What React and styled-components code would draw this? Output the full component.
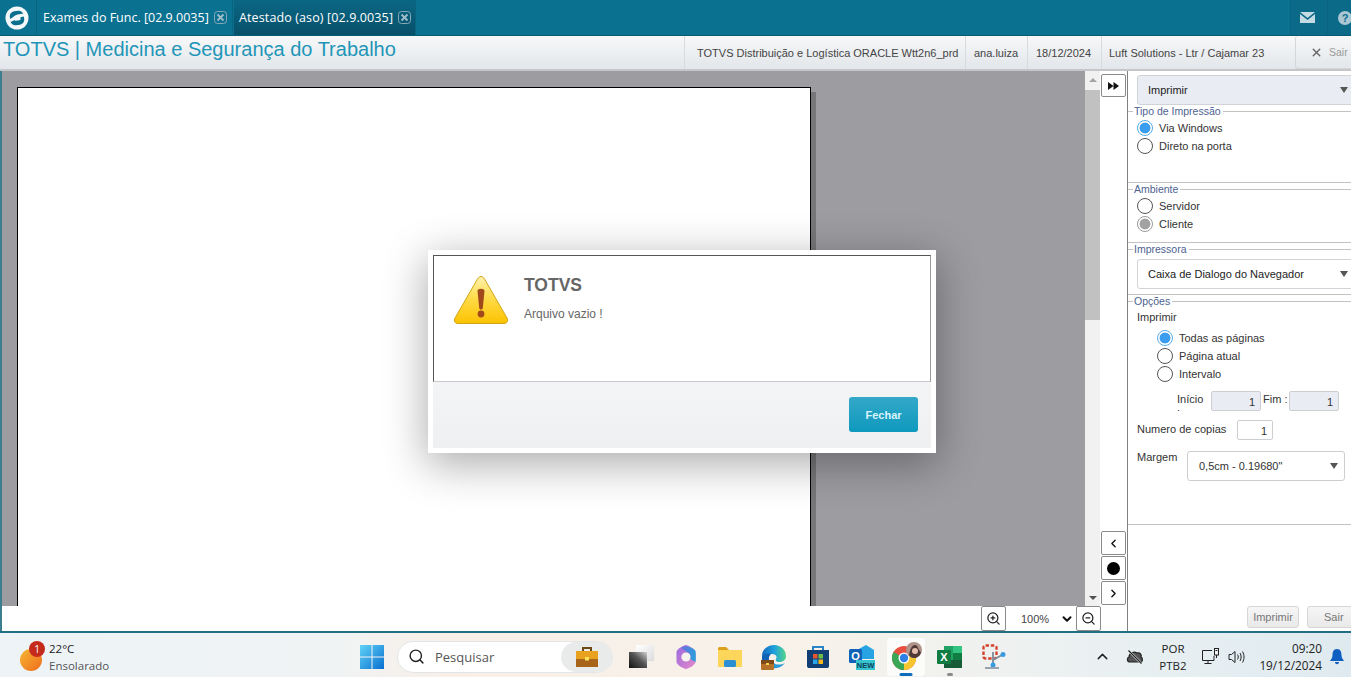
import styled, { createGlobalStyle } from "styled-components";
import { ChevronLeft, ChevronRight, ChevronUp, ChevronDown, Search, ZoomIn, ZoomOut, X } from "lucide-react";

const Global = createGlobalStyle`
  html, body { margin: 0; padding: 0; background: #fff; overflow: hidden; }
  * { box-sizing: border-box; }
  body { font-family: "Liberation Sans", Arial, sans-serif; font-size: 11px; color: #333; }
`;

function TotvsLogo() {
  return (
    <svg width="24" height="24" viewBox="0 0 24 24">
      <circle cx="12" cy="12" r="11.5" fill="#f4f8f9" />
      <rect x="5" y="5" width="14" height="14" rx="5" fill="#0b6f8e" transform="rotate(-8 12 12)" />
      <path d="M5 14.500 C9 13.500 10 10.500 13 10 L19 9" stroke="#f4f8f9" strokeWidth="3.200" fill="none" />
      <rect x="9" y="9.500" width="6.500" height="5" rx="1.500" fill="#f4f8f9" transform="rotate(-8 12 12)" />
    </svg>
  );
}

function TabClose() {
  return (
    <svg width="13" height="13" viewBox="0 0 13 13">
      <rect x=".5" y=".5" width="12" height="12" rx="3" fill="none" stroke="#86a9b8" />
      <path d="M3.500 3.500 L9.500 9.500 M9.500 3.500 L3.500 9.500" stroke="#a3bdc9" strokeWidth="1.800" />
    </svg>
  );
}

function WarningIcon() {
  return (
    <svg width="56" height="50" viewBox="0 0 56 50">
      <defs>
        <linearGradient id="warn" x1="0" y1="0" x2="0" y2="1">
          <stop offset="0" stopColor="#fff3b0" />
          <stop offset=".45" stopColor="#ffdc4a" />
          <stop offset="1" stopColor="#fcc200" />
        </linearGradient>
      </defs>
      <path d="M28 1.500 C29.500 1.500 30.500 2.500 31.500 4 L54 43 C55.500 46 54 48.500 51 48.500 L5 48.500 C2 48.500 .5 46 2 43 L24.500 4 C25.500 2.500 26.500 1.500 28 1.500 Z" fill="url(#warn)" stroke="#d2a514" />
      <path d="M24.500 16 C24.500 13 31.500 13 31.500 16 L29.800 33 C29.600 35 26.400 35 26.200 33 Z" fill="#a1491c" />
      <circle cx="28" cy="39" r="3.400" fill="#a1491c" />
    </svg>
  );
}

function MailIcon() {
  return (
    <svg width="15" height="11" viewBox="0 0 15 11">
      <path d="M0 0 H15 L7.500 6 Z" fill="#c5dbe4" />
      <path d="M0 2 L7.500 8 L15 2 V11 H0 Z" fill="#c5dbe4" />
    </svg>
  );
}

function HelpIcon() {
  return (
    <svg width="14" height="14" viewBox="0 0 14 14">
      <circle cx="7" cy="7" r="7" fill="#a9c6d2" />
      <text x="7" y="11" textAnchor="middle" fontSize="11" fontWeight="700" fill="#0b6f8e" fontFamily="Liberation Sans">?</text>
    </svg>
  );
}

function FastForward() {
  return (
    <svg width="11" height="8" viewBox="0 0 11 8">
      <path d="M0 0 L5.500 4 L0 8 Z M5.500 0 L11 4 L5.500 8 Z" fill="#111" />
    </svg>
  );
}

function Weather() {
  return (
    <svg width="24" height="24" viewBox="0 0 24 24">
      <defs>
        <linearGradient id="sun" x1="0" y1="0" x2="1" y2="1">
          <stop offset="0" stopColor="#f7b733" />
          <stop offset="1" stopColor="#ee6c1c" />
        </linearGradient>
      </defs>
      <circle cx="12" cy="12" r="11" fill="url(#sun)" />
    </svg>
  );
}

function WinLogo() {
  return (
    <svg width="24" height="24" viewBox="0 0 24 24">
      <defs>
        <linearGradient id="win" x1="0" y1="0" x2="1" y2="1">
          <stop offset="0" stopColor="#5fd3f7" />
          <stop offset="1" stopColor="#0a6fd0" />
        </linearGradient>
      </defs>
      <path d="M0 0 H11.500 V11.500 H0 Z M12.500 0 H24 V11.500 H12.500 Z M0 12.500 H11.500 V24 H0 Z M12.500 12.500 H24 V24 H12.500 Z" fill="url(#win)" />
    </svg>
  );
}

function Briefcase() {
  return (
    <svg width="24" height="22" viewBox="0 0 24 22">
      <path d="M8 5 V2 H16 V5" fill="none" stroke="#6e4a12" strokeWidth="2" />
      <rect x="1" y="5" width="22" height="8" fill="#e9a21f" />
      <rect x="1" y="13" width="22" height="8" fill="#a8651a" />
      <rect x="10" y="11" width="4" height="3.500" fill="#f8e25c" />
    </svg>
  );
}

function TaskView() {
  return (
    <svg width="26" height="24" viewBox="0 0 26 24">
      <defs>
        <linearGradient id="tvBack" x1="0" y1="0" x2="1" y2="1">
          <stop offset="0" stopColor="#ffffff" />
          <stop offset="1" stopColor="#dcdcdc" />
        </linearGradient>
        <linearGradient id="tvFront" x1="1" y1="0" x2="0" y2="1">
          <stop offset="0" stopColor="#d0d0d0" />
          <stop offset=".45" stopColor="#555" />
          <stop offset="1" stopColor="#111" />
        </linearGradient>
      </defs>
      <rect x="7" y="0" width="18" height="16" fill="url(#tvBack)" />
      <rect x="0" y="7" width="18" height="16" fill="url(#tvFront)" />
    </svg>
  );
}

function Copilot() {
  return (
    <svg width="22" height="26" viewBox="0 0 22 26">
      <defs>
        <linearGradient id="copA" x1="0" y1="0" x2="1" y2="0">
          <stop offset="0" stopColor="#6a6fdc" />
          <stop offset="1" stopColor="#2aa0dc" />
        </linearGradient>
        <linearGradient id="copB" x1="0" y1="0" x2="1" y2="1">
          <stop offset="0" stopColor="#9a6ae0" />
          <stop offset="1" stopColor="#e58ac8" />
        </linearGradient>
      </defs>
      <path d="M11 1 C13 1 20 5 20.500 8 V18 C20.500 21 13 25 11 25 C9 25 1.500 21 1.500 18 V8 C1.500 5 9 1 11 1 Z" fill="url(#copB)" />
      <path d="M6 4 C9 1.500 13 1 20 6 C21 7 21 16 20.500 18 L15 15 V10 Z" fill="url(#copA)" />
      <circle cx="11" cy="13" r="4.600" fill="#f6f3ee" />
    </svg>
  );
}

function Folder() {
  return (
    <svg width="26" height="22" viewBox="0 0 26 22">
      <path d="M1 3 C1 1.500 2 1 3 1 H9 L12 4 H1 Z" fill="#dba017" />
      <rect x="1" y="4" width="24" height="17" fill="#fbd65b" />
      <rect x="7" y="14" width="12" height="7" rx="1.500" fill="#2b8fd3" />
    </svg>
  );
}

function Edge() {
  return (
    <svg width="26" height="26" viewBox="0 0 26 26">
      <defs>
        <linearGradient id="edgeA" x1="0" y1="0" x2="1" y2="0">
          <stop offset="0" stopColor="#1268c0" />
          <stop offset=".5" stopColor="#1ea0dc" />
          <stop offset="1" stopColor="#53d48a" />
        </linearGradient>
      </defs>
      <path d="M1 12 C1 5 7 1 13 1 C20 1 25 6 25 12 C25 16 22 18 18 18 C15 18 14 16.500 15 15 C16.500 13 15 10 11 10 C7 10 3 11 1 12 Z" fill="url(#edgeA)" />
      <path d="M1 12 C3 10 7 9 10 10 C8 12 7 15 9 18 H1 Z" fill="#0f63b5" />
      <path d="M10 24 C14 25 20 24 24 19 C20 21 15 21 13 19 Z" fill="#2a9ad8" />
      <rect x="0" y="16" width="13" height="10" rx="1" fill="#b5702a" />
      <rect x="0" y="16" width="13" height="4" fill="#7e4a1a" />
      <rect x="5" y="19" width="3" height="2" fill="#f2d050" />
    </svg>
  );
}

function Store() {
  return (
    <svg width="24" height="24" viewBox="0 0 24 24">
      <path d="M7 5 V2 H17 V5" fill="none" stroke="#2a84c9" strokeWidth="2" />
      <path d="M1 5 H23 V21 C23 22.500 22 23 21 23 H3 C2 23 1 22.500 1 21 Z" fill="#123f73" />
      <rect x="7" y="9" width="4.500" height="4.500" fill="#e8552d" />
      <rect x="12.500" y="9" width="4.500" height="4.500" fill="#6cc04a" />
      <rect x="7" y="14.500" width="4.500" height="4.500" fill="#2ba5e8" />
      <rect x="12.500" y="14.500" width="4.500" height="4.500" fill="#f8b719" />
    </svg>
  );
}

function Outlook() {
  return (
    <svg width="26" height="26" viewBox="0 0 26 26">
      <path d="M8 6 L17 1 L25 6 V15 H8 Z" fill="#27a3e3" />
      <rect x="0" y="5" width="13" height="14" rx="1.500" fill="#0f62b8" />
      <text x="6.500" y="16" textAnchor="middle" fontSize="11" fontWeight="700" fill="#fff" fontFamily="Liberation Sans">O</text>
      <rect x="7" y="16" width="19" height="10" fill="#35c3cf" />
      <text x="16.500" y="24" textAnchor="middle" fontSize="7.500" fontWeight="700" fill="#10405a" fontFamily="Liberation Sans">NEW</text>
    </svg>
  );
}

function Chrome() {
  return (
    <svg width="32" height="30" viewBox="0 0 32 30">
      <circle cx="14" cy="16" r="12" fill="#e8503f" />
      <path d="M14 16 L24.400 10 A12 12 0 0 1 14 28 Z" fill="#f5c62e" />
      <path d="M14 16 L14 28 A12 12 0 0 1 3.600 10 Z" fill="#3aa757" />
      <circle cx="14" cy="16" r="5.500" fill="#fff" />
      <circle cx="14" cy="16" r="4.200" fill="#2f7fe6" />
      <circle cx="24" cy="8" r="8" fill="#b0938a" />
      <path d="M19 13 C20 7 22 3 25 3 C28 3 28 8 31 10 C30 14 27 16 24 16 C22 16 20 15 19 13 Z" fill="#4f3a36" />
      <circle cx="25" cy="9" r="3" fill="#e5bfae" />
    </svg>
  );
}

function Excel() {
  return (
    <svg width="26" height="24" viewBox="0 0 26 24">
      <rect x="7" y="1" width="18" height="22" fill="#21a366" />
      <rect x="16" y="1" width="9" height="7" fill="#33c481" />
      <rect x="16" y="8" width="9" height="7" fill="#107c41" />
      <rect x="7" y="15" width="18" height="8" fill="#185c37" />
      <rect x="0" y="5" width="14" height="14" rx="1" fill="#107c41" />
      <text x="7" y="16" textAnchor="middle" fontSize="11" fontWeight="700" fill="#fff" fontFamily="Liberation Sans">X</text>
    </svg>
  );
}

function Snip() {
  return (
    <svg width="24" height="26" viewBox="0 0 24 26">
      <rect x="1.500" y="1.500" width="13" height="13" rx="2" fill="none" stroke="#d5432e" strokeWidth="2.400" strokeDasharray="3.500 1.800" />
      <path d="M11 8 L11 19 M11 16 L20 11" stroke="#7d8a99" strokeWidth="1.800" fill="none" />
      <circle cx="21" cy="10.500" r="2.500" fill="#3b9be0" />
      <circle cx="11" cy="21" r="2.500" fill="#3b9be0" />
      <rect x="3" y="23" width="14" height="2" fill="#9aa3ad" />
    </svg>
  );
}

function CloudOff() {
  return (
    <svg width="18" height="14" viewBox="0 0 18 14">
      <path d="M4 12 C1 12 .5 8 3 7 C3 3 8 1 11 3 C14 2 16 5 15 7 C17 8 17 12 14 12 Z" fill="#555" stroke="#222" strokeWidth="1.200" />
      <path d="M3 1 L15 13" stroke="#eef2f3" strokeWidth="2.400" />
      <path d="M2.500 .500 L15.500 13.500" stroke="#222" strokeWidth="1.200" />
    </svg>
  );
}

function NetworkIcon() {
  return (
    <svg width="20" height="18" viewBox="0 0 20 18" fill="none" stroke="#222" strokeWidth="1">
      <path d="M11 2.500 H1.500 V12.500 H13 V8" />
      <path d="M7 12.500 V15.500 M3.500 15.500 H10.500" />
      <rect x="13.500" y=".5" width="4" height="6.500" fill="#eef2f3" />
      <path d="M15.500 7 V10 M14.500 2.500 H16.500" />
    </svg>
  );
}

function SpeakerIcon() {
  return (
    <svg width="18" height="14" viewBox="0 0 18 14" fill="none" stroke="#222" strokeWidth="1">
      <path d="M1 4.500 H3.500 L7 1.500 V12.500 L3.500 9.500 H1 Z" />
      <path d="M9.500 4.500 C10.500 6 10.500 8 9.500 9.500 M12 3 C13.500 5.500 13.500 8.500 12 11 M14.500 1.500 C16.500 5 16.500 9 14.500 12.500" />
    </svg>
  );
}

function Bell() {
  return (
    <svg width="14" height="16" viewBox="0 0 14 16">
      <path d="M7 0 C10.500 0 11.500 3 11.500 6 C11.500 9 13 10.500 14 12 H0 C1 10.500 2.500 9 2.500 6 C2.500 3 3.500 0 7 0 Z" fill="#0f5fc2" />
      <path d="M5 13 H9 C9 16 5 16 5 13 Z" fill="#0f5fc2" />
    </svg>
  );
}

export default function App() {
  return (
    <>
      <Global />
      <Page>
        <TopBar>
          <LogoCell><TotvsLogo /></LogoCell>
          <Tab>Exames do Func. [02.9.0035] <TabClose /></Tab>
          <Tab $active>Atestado (aso) [02.9.0035] <TabClose /></Tab>
          <TopSpacer />
          <TopIcon><MailIcon /></TopIcon>
          <TopIcon $clip><HelpIcon /></TopIcon>
        </TopBar>

        <Header>
          <Title>TOTVS | Medicina e Segurança do Trabalho</Title>
          <InfoCell $w={281} $pad={12}>TOTVS Distribuição e Logística ORACLE Wtt2n6_prd</InfoCell>
          <InfoCell $w={62} $pad={8}>ana.luiza</InfoCell>
          <InfoCell $w={74} $pad={8}>18/12/2024</InfoCell>
          <InfoCell $w={172} $pad={7}>Luft Solutions - Ltr / Cajamar 23</InfoCell>
          <SairButton><X size={13} strokeWidth={2.600} color="#666" /><span>Sair</span></SairButton>
        </Header>

        <Main>
          <LeftArea>
            <ViewerRow>
              <Viewer>
                <Sheet />
              </Viewer>
              <Scrollbar>
                <ScrollArrow $up />
                <ScrollTrack><ScrollThumb /></ScrollTrack>
                <ScrollArrow />
              </Scrollbar>
              <NavColumn>
                <NavButton $h={23}><FastForward /></NavButton>
                <NavGroup>
                  <NavButton><ChevronLeft size={13} strokeWidth={2.600} color="#111" /></NavButton>
                  <NavButton><Dot /></NavButton>
                  <NavButton><ChevronRight size={13} strokeWidth={2.600} color="#111" /></NavButton>
                </NavGroup>
              </NavColumn>
            </ViewerRow>
            <ZoomBar>
              <ZoomButton><ZoomIn size={15} strokeWidth={2} color="#222" /></ZoomButton>
              <ZoomSelect>100%<ChevronDown size={14} strokeWidth={3.400} color="#111" /></ZoomSelect>
              <ZoomButton><ZoomOut size={15} strokeWidth={2} color="#222" /></ZoomButton>
            </ZoomBar>
          </LeftArea>

          <Panel>
            <Dropdown $top={4} $h={30} $bg="#e9ecf2" $w={230}>Imprimir<Caret /></Dropdown>
            <Section $h={78}>
              <Legend>Tipo de Impressão</Legend>
              <RadioList $top={3}>
                <RadioRow><Radio $on="blue" />Via Windows</RadioRow>
                <RadioRow><Radio />Direto na porta</RadioRow>
              </RadioList>
            </Section>
            <Section $h={60}>
              <Legend>Ambiente</Legend>
              <RadioList $top={3}>
                <RadioRow><Radio />Servidor</RadioRow>
                <RadioRow><Radio $on="gray" />Cliente</RadioRow>
              </RadioList>
            </Section>
            <Section $h={52}>
              <Legend>Impressora</Legend>
              <Dropdown $top={4} $h={30} $bg="#fff" $w={230}>Caixa de Dialogo do Navegador<Caret /></Dropdown>
            </Section>
            <Section $h={230}>
              <Legend>Opções</Legend>
              <FieldLabel>Imprimir</FieldLabel>
              <RadioList $top={6} $left={20}>
                <RadioRow><Radio $on="blue" />Todas as páginas</RadioRow>
                <RadioRow><Radio />Página atual</RadioRow>
                <RadioRow><Radio />Intervalo</RadioRow>
              </RadioList>
              <RangeRow>
                <RangeLabel>Início :</RangeLabel>
                <NumberBox $w={50} $bg="#e9ecf2">1</NumberBox>
                <FimLabel>Fim :</FimLabel>
                <NumberBox $w={50} $bg="#e9ecf2">1</NumberBox>
              </RangeRow>
              <CopiesRow>
                <CopiesLabel>Numero de copias</CopiesLabel>
                <NumberBox $w={36} $bg="#fff">1</NumberBox>
              </CopiesRow>
              <MarginRow>
                <MarginLabel>Margem</MarginLabel>
                <MarginSelect>0,5cm - 0.19680"<Caret /></MarginSelect>
              </MarginRow>
            </Section>
            <PanelFooter>
              <FooterButton $w={52}>Imprimir</FooterButton>
              <FooterButton $w={60}>Sair</FooterButton>
            </PanelFooter>
          </Panel>
        </Main>

        <Taskbar>
          <WeatherBox>
            <WeatherIcon>
              <Weather />
              <Badge>1</Badge>
            </WeatherIcon>
            <WeatherText>
              <span>22°C</span>
              <small>Ensolarado</small>
            </WeatherText>
          </WeatherBox>
          <TaskCenter>
            <TaskIcon $w={26}><WinLogo /></TaskIcon>
            <SearchPill>
              <Search size={17} strokeWidth={2} color="#222" />
              <SearchText>Pesquisar</SearchText>
              <SearchBadge><Briefcase /></SearchBadge>
            </SearchPill>
            <TaskIcon><TaskView /></TaskIcon>
            <TaskIcon><Copilot /></TaskIcon>
            <TaskIcon><Folder /></TaskIcon>
            <TaskIcon><Edge /></TaskIcon>
            <TaskIcon><Store /></TaskIcon>
            <TaskIcon><Outlook /></TaskIcon>
            <TaskIcon $active><ChromeBox><Chrome /></ChromeBox><RunMark $blue /></TaskIcon>
            <TaskIcon><Excel /><RunMark /></TaskIcon>
            <TaskIcon><Snip /></TaskIcon>
          </TaskCenter>
          <Tray>
            <ChevronUp size={17} strokeWidth={2} color="#222" />
            <TrayCloud><CloudOff /></TrayCloud>
            <Lang><span>POR</span><span>PTB2</span></Lang>
            <TrayNet><NetworkIcon /><SpeakerIcon /></TrayNet>
            <Clock><span>09:20</span><span>19/12/2024</span></Clock>
            <Bell />
          </Tray>
        </Taskbar>

        <Modal>
          <ModalInner>
            <ModalBody>
              <WarningIcon />
              <ModalText>
                <ModalTitle>TOTVS</ModalTitle>
                <ModalMessage>Arquivo vazio !</ModalMessage>
              </ModalText>
            </ModalBody>
            <ModalFooter>
              <PrimaryButton>Fechar</PrimaryButton>
            </ModalFooter>
          </ModalInner>
        </Modal>
      </Page>
    </>
  );
}

const Page = styled.div`
  position: relative;
  width: 1351px;
  height: 677px;
  display: flex;
  flex-direction: column;
  overflow: hidden;
`;

const TopBar = styled.div`
  height: 36px;
  flex: none;
  display: flex;
  background: #0b7191;
  border-bottom: 1px solid #075a74;
`;
const LogoCell = styled.div`
  width: 37px;
  display: flex;
  align-items: center;
  padding-left: 5px;
  border-right: 1px solid #0a6480;
`;
const Tab = styled.div`
  width: ${(p) => (p.$active ? "182px" : "195px")};
  margin-left: 1px;
  padding-left: 5px;
  display: flex;
  align-items: center;
  gap: 5px;
  font-family: "Open Sans", sans-serif;
  font-size: 12.500px;
  letter-spacing: ${(p) => (p.$active ? "0.12px" : "0")};
  white-space: nowrap;
  color: #fff;
  background: ${(p) => (p.$active ? "linear-gradient(#0a6784, #08506a)" : "transparent")};
  border-right: 1px solid #0a6480;
`;
const TopSpacer = styled.div`
  flex: 1;
`;
const TopIcon = styled.div`
  width: ${(p) => (p.$clip ? "24px" : "37px")};
  display: flex;
  align-items: center;
  justify-content: ${(p) => (p.$clip ? "flex-end" : "center")};
  padding-right: ${(p) => (p.$clip ? "0" : "4px")};
  background: #0a6a88;
  border-left: 1px solid #0a6480;
  overflow: hidden;
  & > svg { margin-right: ${(p) => (p.$clip ? "-1px" : "0")}; }
`;

const Header = styled.div`
  height: 35px;
  flex: none;
  display: flex;
  align-items: stretch;
  background: linear-gradient(#f6f8f9, #e3e6ea);
  border-bottom: 2px solid #c4c6c9;
`;
const Title = styled.div`
  flex: 1;
  padding: 1px 0 0 3px;
  font-size: 20px;
  line-height: 24px;
  color: #1f96b8;
  white-space: nowrap;
`;
const InfoCell = styled.div`
  width: ${(p) => p.$w}px;
  display: flex;
  align-items: center;
  padding-left: ${(p) => p.$pad}px;
  font-size: 11px;
  color: #444;
  white-space: nowrap;
  border-left: 1px solid #d8dadd;
`;
const SairButton = styled.div`
  width: 56px;
  margin-left: 22px;
  display: flex;
  align-items: center;
  gap: 6px;
  padding-left: 14px;
  font-size: 10.500px;
  color: #9a9a9a;
  white-space: nowrap;
  border-left: 1px solid #d4d6d9;
  border-bottom: 1px solid #d4d6d9;
  border-radius: 3px 0 0 3px;
`;

const Main = styled.div`
  flex: 1;
  min-height: 0;
  display: flex;
  border-bottom: 2px solid #1f6f85;
`;
const LeftArea = styled.div`
  width: 1127px;
  display: flex;
  flex-direction: column;
  border-left: 2px solid #3d7d90;
`;
const ViewerRow = styled.div`
  flex: 1;
  min-height: 0;
  display: flex;
`;
const Viewer = styled.div`
  flex: 1;
  padding: 16px 0 0 15px;
  background: #9c9ca1;
  overflow: hidden;
`;
const Sheet = styled.div`
  width: 794px;
  height: 700px;
  background: #fff;
  border: 1px solid #000;
  box-shadow: 5px 5px 0 #77777a;
`;
const Scrollbar = styled.div`
  width: 15px;
  display: flex;
  flex-direction: column;
  background: #f1f1f1;
`;
const ScrollArrow = styled.div`
  height: 17px;
  flex: none;
  display: flex;
  align-items: center;
  justify-content: center;
  &::after {
    content: "";
    border-left: 4px solid transparent;
    border-right: 4px solid transparent;
    ${(p) => (p.$up ? "border-bottom: 4px solid #a3a3a3;" : "border-top: 4px solid #505050;")}
  }
`;
const ScrollTrack = styled.div`
  flex: 1;
`;
const ScrollThumb = styled.div`
  height: 230px;
  margin-top: 2px;
  background: #c1c1c1;
`;
const NavColumn = styled.div`
  width: 27px;
  padding: 3px 0 1px 1px;
  display: flex;
  flex-direction: column;
  justify-content: space-between;
  background: #fff;
`;
const NavGroup = styled.div`
  display: flex;
  flex-direction: column;
  gap: 1px;
`;
const NavButton = styled.div`
  width: 25px;
  height: ${(p) => p.$h || 24}px;
  display: flex;
  align-items: center;
  justify-content: center;
  background: #fff;
  border: 1px solid #8a8a8a;
  border-radius: 2px;
`;
const Dot = styled.div`
  width: 13px;
  height: 13px;
  border-radius: 50%;
  background: #000;
`;
const ZoomBar = styled.div`
  height: 25px;
  flex: none;
  display: flex;
  justify-content: flex-end;
  padding-right: 26px;
  background: #fff;
`;
const ZoomButton = styled.div`
  width: 25px;
  display: flex;
  align-items: center;
  justify-content: center;
  border: 1px solid #8a8a8a;
  border-radius: 2px;
`;
const ZoomSelect = styled.div`
  width: 70px;
  display: flex;
  align-items: center;
  justify-content: space-between;
  padding: 0 2px 0 15px;
  font-size: 11px;
  color: #444;
`;

const Panel = styled.div`
  flex: 1;
  min-width: 0;
  display: flex;
  flex-direction: column;
  border-left: 1px solid #808080;
  overflow: hidden;
  background: #fff;
`;
const Dropdown = styled.div`
  flex: none;
  width: ${(p) => p.$w}px;
  height: ${(p) => p.$h}px;
  margin: ${(p) => p.$top}px 0 0 9px;
  padding: 0 6px 0 10px;
  display: flex;
  align-items: center;
  justify-content: space-between;
  font-size: 11px;
  color: #222;
  background: ${(p) => p.$bg};
  border: 1px solid #d0d3d8;
  border-radius: 3px;
  & > i { margin-right: 12px; }
`;
const Caret = styled.i`
  width: 0;
  height: 0;
  border-left: 4px solid transparent;
  border-right: 4px solid transparent;
  border-top: 6px solid #555;
`;
const Section = styled.div`
  flex: none;
  height: ${(p) => p.$h}px;
  border-bottom: 1px solid #c2c2c2;
`;
const Legend = styled.div`
  height: 12px;
  display: flex;
  align-items: center;
  gap: 2px;
  padding-left: 6px;
  font-size: 10.500px;
  line-height: 12px;
  color: #4d6291;
  white-space: nowrap;
  position: relative;
  &::after {
    content: "";
    flex: 1;
    height: 1px;
    background: #c2c2c2;
  }
  &::before {
    content: "";
    position: absolute;
    left: 0;
    width: 5px;
    height: 1px;
    background: #c2c2c2;
  }
`;
const RadioList = styled.div`
  display: flex;
  flex-direction: column;
  gap: 2px;
  margin: ${(p) => p.$top}px 0 0 ${(p) => 9 + (p.$left || 0)}px;
`;
const RadioRow = styled.div`
  height: 16px;
  display: flex;
  align-items: center;
  gap: 6px;
  font-size: 11px;
  color: #333;
`;
const Radio = styled.span`
  width: 16px;
  height: 16px;
  flex: none;
  border-radius: 50%;
  border: 1px solid ${(p) => (p.$on === "blue" ? "#59ace8" : p.$on === "gray" ? "#9a9a9a" : "#555")};
  background: ${(p) =>
    p.$on === "blue"
      ? "radial-gradient(circle, #3a9df0 0 5px, #fff 5.800px)"
      : p.$on === "gray"
        ? "radial-gradient(circle, #a2a2a2 0 5px, #fff 5.800px)"
        : "#fff"};
`;
const FieldLabel = styled.div`
  margin: 3px 0 0 9px;
  height: 14px;
  line-height: 14px;
  font-size: 11px;
  color: #333;
`;
const RangeRow = styled.div`
  height: 20px;
  margin: 9px 0 0 49px;
  display: flex;
  align-items: flex-start;
`;
const RangeLabel = styled.div`
  width: 34px;
  height: 20px;
  padding: 2px 6px 0 0;
  line-height: 13px;
  overflow: hidden;
  font-size: 11px;
  color: #333;
  word-spacing: 10px;
`;
const FimLabel = styled.div`
  width: 28px;
  padding: 2px 0 0 2px;
  line-height: 13px;
  font-size: 11px;
  color: #333;
`;
const NumberBox = styled.div`
  width: ${(p) => p.$w}px;
  height: 20px;
  flex: none;
  padding: 1px 5px 0 0;
  display: flex;
  align-items: center;
  justify-content: flex-end;
  font-size: 11px;
  color: #333;
  background: ${(p) => p.$bg};
  border: 1px solid #ccced2;
  border-radius: 2px;
`;
const CopiesRow = styled.div`
  height: 20px;
  margin: 9px 0 0 9px;
  display: flex;
`;
const CopiesLabel = styled.div`
  width: 100px;
  line-height: 18px;
  font-size: 11px;
  color: #333;
`;
const MarginRow = styled.div`
  margin: 11px 0 0 9px;
  display: flex;
`;
const MarginLabel = styled.div`
  width: 50px;
  line-height: 12px;
  font-size: 11px;
  color: #333;
`;
const MarginSelect = styled.div`
  width: 158px;
  height: 30px;
  padding: 0 6px 0 11px;
  display: flex;
  align-items: center;
  justify-content: space-between;
  font-size: 11px;
  color: #333;
  border: 1px solid #ccced2;
  border-radius: 3px;
`;
const PanelFooter = styled.div`
  flex: 1;
  display: flex;
  align-items: flex-end;
  gap: 8px;
  padding: 0 0 3px 119px;
`;
const FooterButton = styled.div`
  width: ${(p) => p.$w}px;
  flex: none;
  height: 22px;
  display: flex;
  align-items: center;
  justify-content: ${(p) => (p.$w > 52 ? "flex-start" : "center")};
  padding-left: ${(p) => (p.$w > 52 ? "16px" : "0")};
  font-size: 11px;
  color: #777;
  background: linear-gradient(#f6f6f6, #e9e9e9);
  border: 1px solid #d6d6d6;
  border-radius: 3px;
`;

const Taskbar = styled.div`
  height: 44px;
  flex: none;
  display: flex;
  align-items: center;
  padding-top: 3px;
  font-family: "Open Sans", sans-serif;
  color: #222;
  background: linear-gradient(90deg, #edf3f6 0, #f0f3f4 25%, #f8efe8 33%, #f7f2ea 60%, #ebf1f2 80%, #dfeaf0 100%);
`;
const WeatherBox = styled.div`
  width: 359px;
  flex: none;
  padding-left: 20px;
  display: flex;
  align-items: center;
  gap: 8px;
`;
const WeatherIcon = styled.div`
  position: relative;
  width: 21px;
  height: 24px;
  & > svg { margin-top: 3px; margin-left: -1px; }
`;
const Badge = styled.span`
  position: absolute;
  top: -4px;
  left: 9px;
  width: 16px;
  height: 16px;
  border-radius: 50%;
  display: flex;
  align-items: center;
  justify-content: center;
  font-size: 10px;
  color: #fff;
  background: #c42b1c;
`;
const WeatherText = styled.div`
  display: flex;
  flex-direction: column;
  font-size: 11.500px;
  line-height: 17px;
  & small { font-size: 11.500px; color: #555; }
`;
const TaskCenter = styled.div`
  flex: none;
  display: flex;
  align-items: center;
  height: 100%;
`;
const TaskIcon = styled.div`
  position: relative;
  width: ${(p) => p.$w || 44}px;
  height: 100%;
  flex: none;
  display: flex;
  align-items: center;
  justify-content: center;
`;
const ChromeBox = styled.div`
  width: 38px;
  height: 38px;
  margin-top: 1px;
  display: flex;
  align-items: center;
  justify-content: center;
  background: rgba(255, 255, 255, 0.75);
  border-radius: 4px;
`;
const RunMark = styled.span`
  position: absolute;
  bottom: 1px;
  left: 50%;
  transform: translateX(-50%);
  width: ${(p) => (p.$blue ? "13px" : "6px")};
  height: 3px;
  border-radius: 2px;
  background: ${(p) => (p.$blue ? "#0f6cbd" : "#8a8a8a")};
`;
const SearchPill = styled.div`
  width: 216px;
  height: 32px;
  margin: 0 7px 0 12px;
  padding-left: 10px;
  display: flex;
  align-items: center;
  gap: 10px;
  background: #fff;
  border: 1px solid #e3e6e8;
  border-radius: 16px;
`;
const SearchText = styled.span`
  flex: 1;
  font-size: 13px;
  color: #555;
`;
const SearchBadge = styled.div`
  width: 51px;
  height: 100%;
  display: flex;
  align-items: center;
  justify-content: center;
  background: #e9ebeb;
  border-radius: 16px;
`;
const Tray = styled.div`
  flex: 1;
  display: flex;
  align-items: center;
  padding-left: 78px;
`;
const TrayCloud = styled.div`
  margin-left: 15px;
  display: flex;
`;
const Lang = styled.div`
  margin-left: 12px;
  width: 34px;
  display: flex;
  flex-direction: column;
  align-items: center;
  font-size: 11.500px;
  line-height: 17px;
`;
const TrayNet = styled.div`
  margin-left: 11px;
  display: flex;
  align-items: center;
  gap: 7px;
`;
const Clock = styled.div`
  width: 76px;
  margin: 0 8px 0 0;
  display: flex;
  flex-direction: column;
  align-items: flex-end;
  font-size: 11.800px;
  line-height: 17px;
`;

const Modal = styled.div`
  position: absolute;
  left: 428px;
  top: 250px;
  width: 508px;
  height: 203px;
  padding: 5px;
  background: #fff;
  box-shadow: 0 10px 40px 2px rgba(0, 0, 0, 0.32);
`;
const ModalInner = styled.div`
  height: 100%;
  display: flex;
  flex-direction: column;
`;
const ModalBody = styled.div`
  height: 127px;
  flex: none;
  display: flex;
  align-items: flex-start;
  gap: 15px;
  padding: 19px 0 0 19px;
  border: 1px solid #555;
  border-right-color: #999;
  border-bottom: 1px solid #c8cacd;
  & > svg { flex: none; }
`;
const ModalText = styled.div`
  display: flex;
  flex-direction: column;
`;
const ModalTitle = styled.div`
  font-size: 17.500px;
  font-weight: 700;
  line-height: 20px;
  color: #666;
`;
const ModalMessage = styled.div`
  margin-top: 12px;
  font-size: 12px;
  line-height: 14px;
  color: #666;
`;
const ModalFooter = styled.div`
  flex: 1;
  display: flex;
  align-items: center;
  justify-content: flex-end;
  padding: 0 13px 1px 0;
  background: linear-gradient(#f3f4f5, #eef0f1);
`;
const PrimaryButton = styled.div`
  width: 69px;
  height: 35px;
  display: flex;
  align-items: center;
  justify-content: center;
  font-size: 11px;
  font-weight: 700;
  color: #d8f4fb;
  background: linear-gradient(#33a8c8, #0f99be);
  border-radius: 3px;
`;
